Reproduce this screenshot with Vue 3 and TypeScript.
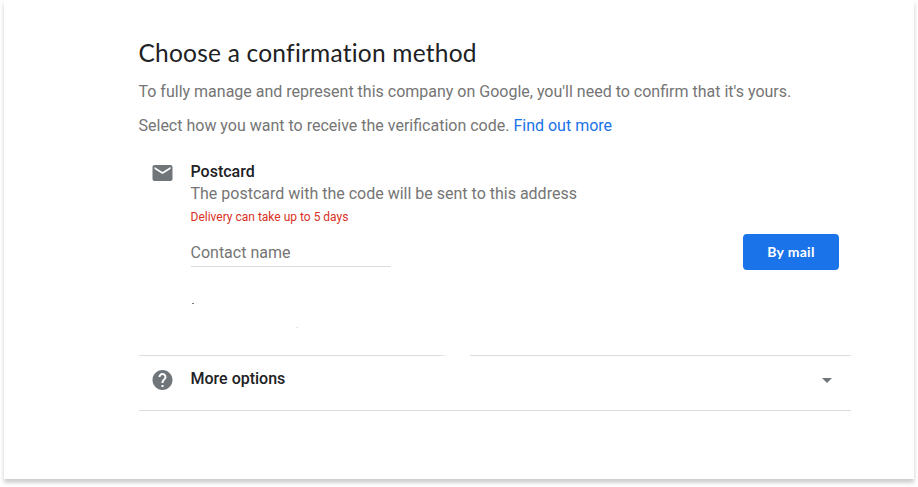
<script setup lang="ts">
import { ref } from 'vue'

const contactName = ref('')
</script>

<template>
  <div class="page">
    <main class="card">
      <h1 class="title">Choose a confirmation method</h1>
      <p class="intro">To fully manage and represent this company on Google, you'll need to confirm that it's yours.</p>
      <p class="intro">Select how you want to receive the verification code. <a class="link">Find out more</a></p>

      <section class="method">
        <svg class="icon" viewBox="0 0 24 24">
          <path d="M20 4H4c-1.100 0-1.990.9-1.990 2L2 18c0 1.100.9 2 2 2h16c1.100 0 2-.9 2-2V6c0-1.100-.9-2-2-2zm0 4l-8 5-8-5V6l8 5 8-5v2z" />
        </svg>
        <div class="details">
          <h2 class="name">Postcard</h2>
          <p class="description">The postcard with the code will be sent to this address</p>
          <p class="delivery">Delivery can take up to 5 days</p>
          <div class="form">
            <input v-model="contactName" class="field" type="text" placeholder="Contact name" />
            <button class="button" type="button">By mail</button>
          </div>
          <div class="address"><i class="dot"></i><i class="speck"></i></div>
        </div>
      </section>

      <div class="divider"><span class="left"></span><span class="right"></span></div>

      <section class="more">
        <svg class="icon" viewBox="0 0 24 24">
          <path d="M12 2C6.480 2 2 6.480 2 12s4.480 10 10 10 10-4.480 10-10S17.520 2 12 2zm1 17h-2v-2h2v2zm2.070-7.750l-.9.920C13.450 12.900 13 13.500 13 15h-2v-.5c0-1.100.45-2.100 1.170-2.830l1.240-1.260c.37-.36.59-.86.59-1.410 0-1.100-.9-2-2-2s-2 .9-2 2H8c0-2.210 1.790-4 4-4s4 1.790 4 4c0 .88-.36 1.680-.93 2.250z" />
        </svg>
        <h2 class="name">More options</h2>
        <svg class="arrow" viewBox="0 0 10 5"><path d="M0 0h10L5 5z" /></svg>
      </section>
    </main>
  </div>
</template>

<style>
body {
  background: #fefefe;
}
</style>

<style scoped>
.page {
  box-sizing: border-box;
  height: 487px;
  padding: 0 4px;
  overflow: hidden;
}
.card {
  box-sizing: border-box;
  height: 479px;
  padding: 36px 63px 0 135px;
  background: #fff;
  box-shadow: 0 4px 4px rgba(0, 0, 0, 0.16), 0 2px 4px rgba(0, 0, 0, 0.05);
  font-family: Roboto, "Liberation Sans", sans-serif;
  font-size: 16px;
  color: #757575;
}
h1, h2, p { margin: 0; font-weight: 400; }
.title {
  height: 44px;
  margin-left: -0.5px;
  line-height: 34px;
  font-family: Lato, "Open Sans", sans-serif;
  font-size: 24.5px;
  letter-spacing: 0.22px;
  font-variant-ligatures: none;
  color: #202124;
  white-space: nowrap;
}
.intro {
  height: 34px;
  margin-left: -0.5px;
  line-height: 24px;
  white-space: nowrap;
}
.link { color: #1a73e8; }
.method {
  display: flex;
  height: 207px;
  padding-top: 13px;
  box-sizing: border-box;
}
.icon {
  flex: none;
  width: 25px;
  height: 24px;
  margin-left: 11px;
  margin-right: 15.5px;
  fill: #70757a;
}
.details { flex: 1; }
.name {
  font-size: 16px;
  font-weight: 500;
  line-height: 22px;
  color: #202124;
}
.description { line-height: 22px; }
.delivery {
  height: 29px;
  line-height: 24px;
  font-size: 12px;
  color: #d93025;
}
.form {
  display: flex;
  justify-content: space-between;
  padding-right: 12px;
}
.field {
  box-sizing: border-box;
  width: 200px;
  height: 33px;
  padding: 5px 0 0;
  border: 0;
  border-bottom: 1px solid #dadce0;
  outline: 0;
  background: transparent;
  font: inherit;
}
.field::placeholder { color: #757575; opacity: 1; }
.button {
  width: 96px;
  height: 36px;
  padding: 0 0 2px;
  border: 0;
  border-radius: 4px;
  background: #1a73e8;
  color: #fff;
  font: 700 14px Lato, "Open Sans", sans-serif;
  letter-spacing: 0.3px;
}
.address {
  display: flex;
  gap: 102px;
  padding: 33px 0 0 1px;
}
.dot { width: 2px; height: 1px; background: #777; }
.speck { width: 2px; height: 1px; margin-top: 24px; background: #e4e4e4; }
.divider {
  display: flex;
  gap: 24px;
  height: 1px;
}
.left {
  width: 307px;
  background: linear-gradient(90deg, #dadce0 98%, #f4f4f4);
}
.right { flex: 1; background: #dadce0; }
.more {
  display: flex;
  box-sizing: border-box;
  height: 55px;
  padding-top: 12px;
  border-bottom: 1px solid #dadce0;
}
.arrow {
  width: 10px;
  height: 5px;
  margin: 10px 19.5px 0 auto;
  fill: #70757a;
}
</style>
